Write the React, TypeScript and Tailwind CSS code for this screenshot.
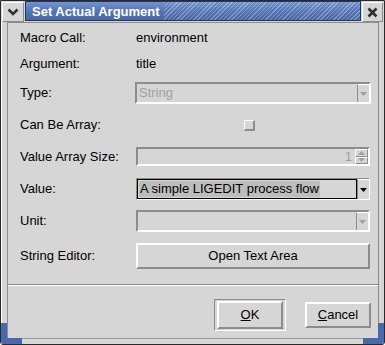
import React from "react";

const Arrow = ({ color }: { color: string }) => (
  <svg width="7" height="4" viewBox="0 0 7 4">
    <polygon points="0,0 7,0 3.5,4" fill={color} />
  </svg>
);

const ComboArrowBtn = ({ color }: { color: string }) => (
  <div className="w-[12px] h-full flex items-center justify-center border-l border-[#8c8c8c] border-t border-t-white bg-[#d6d6d6]">
    <Arrow color={color} />
  </div>
);

export default function App() {
  return (
    <div className="w-[385px] h-[345px] bg-[#d6d6d6] relative flex flex-col border border-[#2a2a2a] rounded-b-[3px] font-['Liberation_Sans',Arial,sans-serif] text-[13px] text-black overflow-hidden">
      {/* Title bar */}
      <div className="flex h-[20px] gap-px">
        <div className="w-[22px] h-full mt-px ml-px bg-[#d6d6d6] border-t border-l border-white border-r border-b border-r-[#8c8c8c] border-b-[#8c8c8c] flex items-center justify-center">
          <svg width="12" height="8" viewBox="0 0 12 8">
            <polyline points="1.5,1.5 6,6 10.5,1.5" fill="none" stroke="#303030" strokeWidth="2.6" />
          </svg>
        </div>
        <div className="flex-1 flex h-full border border-[#1f3566] bg-gradient-to-b from-[#7592cc] via-[#5575b5] to-[#46679f]">
          <div className="pl-[6px] pr-[4px] flex items-center text-white font-bold text-[13px] leading-none whitespace-nowrap">
            Set Actual Argument
          </div>
          <div className="flex-1 bg-[repeating-linear-gradient(135deg,rgba(255,255,255,0.28)_0px,rgba(255,255,255,0.28)_1px,transparent_1px,transparent_3px)]" />
        </div>
        <div className="w-[21px] h-full mt-px mr-px bg-[#d6d6d6] border-t border-l border-white border-r border-b border-r-[#8c8c8c] border-b-[#8c8c8c] flex items-center justify-center">
          <svg width="11" height="11" viewBox="0 0 11 11">
            <path d="M1.5,1.5 L9.5,9.5 M9.5,1.5 L1.5,9.5" stroke="#303030" strokeWidth="2.6" />
          </svg>
        </div>
      </div>

      {/* Body frame */}
      <div className="flex-1 px-[5px] pb-[5px] pt-px border-l border-l-white">
        <div className="h-full border border-[#8c8c8c] border-b-[#9a9a9a] flex flex-col">
          <div className="pl-[12px] flex flex-col">
            {/* Macro Call */}
            <div className="mt-[4px] h-[22px] flex items-center">
              <div className="w-[116px]">Macro Call:</div>
              <div>environment</div>
            </div>
            {/* Argument */}
            <div className="mt-[4px] h-[22px] flex items-center">
              <div className="w-[116px]">Argument:</div>
              <div>title</div>
            </div>
            {/* Type */}
            <div className="mt-[7px] h-[22px] flex items-center">
              <div className="w-[115px]">Type:</div>
              <div className="w-[236px] h-[22px] flex border-2 border-t-[#8c8c8c] border-l-[#8c8c8c] border-b-white border-r-white">
                <div className="flex-1 pl-[2px] flex items-center text-[#a0a0a0]">String</div>
                <ComboArrowBtn color="#a0a0a0" />
              </div>
            </div>
            {/* Can Be Array */}
            <div className="mt-[10px] h-[22px] flex items-center">
              <div className="w-[116px]">Can Be Array:</div>
              <div className="ml-[108px] w-[11px] h-[11px] border border-t-white border-l-white border-r-2 border-b-2 border-r-[#8c8c8c] border-b-[#8c8c8c] bg-[#d6d6d6]" />
            </div>
            {/* Value Array Size */}
            <div className="mt-[11px] h-[19px] flex items-center">
              <div className="w-[116px]">Value Array Size:</div>
              <div className="w-[234px] h-[19px] flex border-2 border-t-[#8c8c8c] border-l-[#8c8c8c] border-b-white border-r-white">
                <div className="flex-1 pr-[3px] flex items-center justify-end text-[#a0a0a0]">1</div>
                <div className="w-[13px] h-full flex flex-col">
                  <div className="flex-1 flex items-center justify-center border border-t-white border-l-white border-r-[#8c8c8c] border-b-[#8c8c8c]">
                    <svg width="7" height="4" viewBox="0 0 7 4"><polygon points="0,4 7,4 3.5,0" fill="#a0a0a0" /></svg>
                  </div>
                  <div className="flex-1 flex items-center justify-center border border-t-white border-l-white border-r-[#8c8c8c] border-b-[#8c8c8c]">
                    <Arrow color="#a0a0a0" />
                  </div>
                </div>
              </div>
            </div>
            {/* Value */}
            <div className="mt-[12px] h-[22px] flex items-center">
              <div className="w-[116px]">Value:</div>
              <div className="w-[234px] h-[22px] flex border border-t-[#8c8c8c] border-l-[#8c8c8c] border-b-white border-r-white">
                <div className="flex-1 border border-black flex items-center pl-px">
                  <span className="bg-[#bdbdbd] leading-[16px] px-px">A simple LIGEDIT process flow</span>
                </div>
                <ComboArrowBtn color="#000000" />
              </div>
            </div>
            {/* Unit */}
            <div className="mt-[10px] h-[22px] flex items-center">
              <div className="w-[116px]">Unit:</div>
              <div className="w-[234px] h-[22px] flex border-2 border-t-[#8c8c8c] border-l-[#8c8c8c] border-b-white border-r-white">
                <div className="flex-1" />
                <ComboArrowBtn color="#a0a0a0" />
              </div>
            </div>
            {/* String Editor */}
            <div className="mt-[11px] h-[26px] flex items-center">
              <div className="w-[116px]">String Editor:</div>
              <div className="w-[234px] h-[26px] flex items-center justify-center border-2 border-t-white border-l-white border-b-[#8c8c8c] border-r-[#8c8c8c]">
                Open Text Area
              </div>
            </div>
          </div>

          {/* Separator */}
          <div className="mt-[15px] h-[2px] border-t border-[#8c8c8c] border-b border-b-white" />

          {/* Buttons */}
          <div className="mt-[13px] flex justify-end items-center pr-[7px]">
            <div className="w-[72px] h-[32px] px-[2px] py-[1px] border border-t-[#8c8c8c] border-l-[#8c8c8c] border-b-white border-r-white">
              <div className="h-full flex items-center justify-center border-2 border-t-white border-l-white border-b-[#8c8c8c] border-r-[#8c8c8c]">
                <span><span className="underline">O</span>K</span>
              </div>
            </div>
            <div className="ml-[19px] w-[66px] h-[26px] flex items-center justify-center border-2 border-t-white border-l-white border-b-[#8c8c8c] border-r-[#8c8c8c]">
              <span><span className="underline">C</span>ancel</span>
            </div>
          </div>
        </div>
      </div>

      {/* Blue corner decorations */}
      <div className="absolute left-0 bottom-0 w-[6px] h-[21px] bg-[#4a69ad] rounded-bl-[3px]" />
      <div className="absolute left-0 bottom-0 w-[21px] h-[6px] bg-[#4a69ad] rounded-bl-[3px]" />
      <div className="absolute right-0 bottom-0 w-[6px] h-[21px] bg-[#4a69ad] rounded-br-[3px]" />
      <div className="absolute right-0 bottom-0 w-[21px] h-[6px] bg-[#4a69ad] rounded-br-[3px]" />
    </div>
  );
}
